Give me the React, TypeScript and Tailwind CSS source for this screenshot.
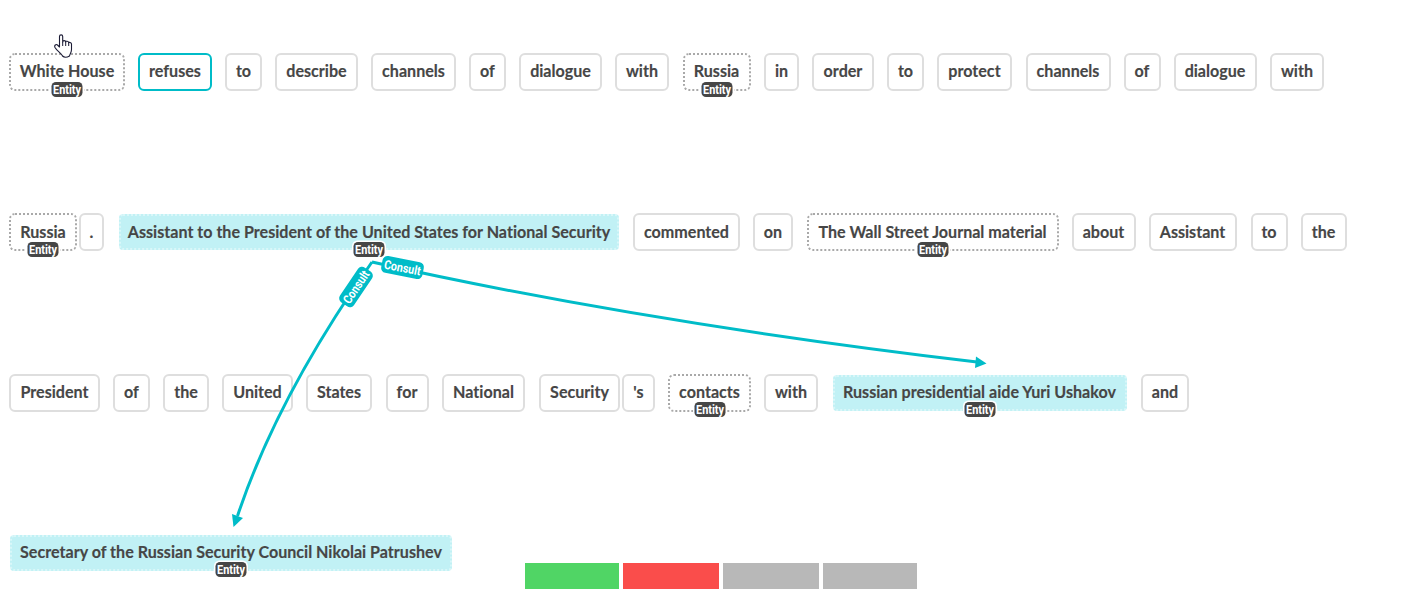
type Kind = "word" | "entity" | "active" | "linked";
type Token = { text: string; width: string; kind?: Kind; gap?: string };

const rows: Token[][] = [
  [
    { text: "White House", width: "w-[116px]", kind: "entity" },
    { text: "refuses", width: "w-[74px]", kind: "active", gap: "ml-[13px]" },
    { text: "to", width: "w-[37px]", gap: "ml-[13px]" },
    { text: "describe", width: "w-[83px]", gap: "ml-[13px]" },
    { text: "channels", width: "w-[85px]", gap: "ml-[13px]" },
    { text: "of", width: "w-[37px]", gap: "ml-[13px]" },
    { text: "dialogue", width: "w-[83px]", gap: "ml-[13px]" },
    { text: "with", width: "w-[54px]", gap: "ml-[13px]" },
    { text: "Russia", width: "w-[68px]", kind: "entity", gap: "ml-[13.5px]" },
    { text: "in", width: "w-[35px]", gap: "ml-[13.5px]" },
    { text: "order", width: "w-[62px]", gap: "ml-[13px]" },
    { text: "to", width: "w-[37px]", gap: "ml-[13px]" },
    { text: "protect", width: "w-[75px]", gap: "ml-[13px]" },
    { text: "channels", width: "w-[85px]", gap: "ml-[13.5px]" },
    { text: "of", width: "w-[37px]", gap: "ml-[13px]" },
    { text: "dialogue", width: "w-[83px]", gap: "ml-[13px]" },
    { text: "with", width: "w-[54px]", gap: "ml-[13.5px]" },
  ],
  [
    { text: "Russia", width: "w-[68px]", kind: "entity" },
    { text: ".", width: "w-[25px]", gap: "ml-[2px]" },
    { text: "Assistant to the President of the United States for National Security", width: "w-[500px]", kind: "linked", gap: "ml-[15px]" },
    { text: "commented", width: "w-[107px]", gap: "ml-[14px]" },
    { text: "on", width: "w-[40px]", gap: "ml-[13px]" },
    { text: "The Wall Street Journal material", width: "w-[252px]", kind: "entity", gap: "ml-[13.5px]" },
    { text: "about", width: "w-[64px]", gap: "ml-[13px]" },
    { text: "Assistant", width: "w-[88px]", gap: "ml-[13px]" },
    { text: "to", width: "w-[37px]", gap: "ml-[14px]" },
    { text: "the", width: "w-[46px]", gap: "ml-[13px]" },
  ],
  [
    { text: "President", width: "w-[91px]" },
    { text: "of", width: "w-[37px]", gap: "ml-[13px]" },
    { text: "the", width: "w-[46px]", gap: "ml-[13px]" },
    { text: "United", width: "w-[71px]", gap: "ml-[13px]" },
    { text: "States", width: "w-[66px]", gap: "ml-[13px]" },
    { text: "for", width: "w-[43px]", gap: "ml-[13.5px]" },
    { text: "National", width: "w-[83px]", gap: "ml-[13.5px]" },
    { text: "Security", width: "w-[81px]", gap: "ml-[14px]" },
    { text: "'s", width: "w-[33px]", gap: "ml-[2px]" },
    { text: "contacts", width: "w-[83px]", kind: "entity", gap: "ml-[13px]" },
    { text: "with", width: "w-[54px]", gap: "ml-[13px]" },
    { text: "Russian presidential aide Yuri Ushakov", width: "w-[294px]", kind: "linked", gap: "ml-[14.5px]" },
    { text: "and", width: "w-[48px]", gap: "ml-[14.5px]" },
  ],
  [{ text: "Secretary of the Russian Security Council Nikolai Patrushev", width: "w-[442px]", kind: "linked", gap: "ml-px" }],
];

const styles: Record<Kind, string> = {
  word: "h-[38px] rounded-[6px] border-2 border-solid border-[#dedede] bg-white",
  active: "h-[38px] rounded-[6px] border-2 border-solid border-[#00bcc8]",
  entity: "h-[38px] rounded-[6px] border-2 border-dotted border-[#a9a9a9]",
  linked: "h-[36px] rounded-[4px] border-2 border-dotted border-[#d9f7f9] bg-[#c1f1f5]",
};

const badgeTops: Record<Kind, string> = {
  word: "top-[25px]",
  active: "top-[25px]",
  entity: "top-[24.5px]",
  linked: "top-[23.5px]",
};

function EntityBadge({ top }: { top: string }) {
  return (
    <svg className={`absolute left-1/2 z-20 -translate-x-1/2 ${top}`} width="34" height="19" viewBox="0 0 34 19">
      <rect x="0" y="0.500" width="34" height="18" rx="5.500" fill="#fff" />
      <rect x="1.500" y="2" width="31" height="15" rx="4.500" fill="#464646" />
      <text x="3" y="13.500" textLength="28" lengthAdjust="spacingAndGlyphs" className="fill-white font-['Roboto',sans-serif] text-[12.5px] font-bold">Entity</text>
    </svg>
  );
}

function TokenBox({ text, width, kind = "word", gap = "" }: Token) {
  return (
    <div className={`relative flex shrink-0 items-center justify-center whitespace-nowrap ${styles[kind]} ${width} ${gap}`}>
      <span className="-mt-px">{text}</span>
      {(kind === "entity" || kind === "linked") && <EntityBadge top={badgeTops[kind]} />}
    </div>
  );
}

function RelationLabel({ transform }: { transform: string }) {
  return (
    <g transform={transform}>
      <rect x="-21" y="-8.500" width="42" height="17" rx="5" fill="#00bcc8" />
      <text x="-18.500" y="4.500" textLength="37" lengthAdjust="spacingAndGlyphs" className="fill-white font-['Roboto',sans-serif] text-[12.5px] font-bold">Consult</text>
    </g>
  );
}

export default function App() {
  return (
    <main className="relative h-[589px] w-[1411px] overflow-hidden bg-white font-['Lato',sans-serif] text-[16.1px] font-bold text-[#464646] [-webkit-text-stroke:0.15px_#464646] [font-variant-ligatures:none]">
      <div className="flex flex-col gap-[122.3px] pl-[9px] pt-[53px]">
        {rows.map((row, i) => (
          <div key={i} className="flex h-[38px] items-center">
            {row.map((token, j) => <TokenBox key={j} {...token} />)}
          </div>
        ))}
      </div>
      <svg className="absolute left-0 top-0 z-10 [-webkit-text-stroke:0]" width="1411" height="589" viewBox="0 0 1411 589">
        <g fill="none" stroke="#00bcc8" strokeWidth="3" strokeLinejoin="round">
          <path d="M237.500 516Q277 397 372 262" />
          <path d="M372 262Q640 322 977 362" />
        </g>
        <path d="M232 514L243 518L233.500 527Z" fill="#00bcc8" />
        <path d="M976 356.500L986.500 363.500L975 368Z" fill="#00bcc8" />
        <RelationLabel transform="translate(402.500 267.500) rotate(11)" />
        <RelationLabel transform="translate(356 287) rotate(-56)" />
      </svg>
      <svg className="absolute left-[54px] top-[34px] z-20" width="19" height="25" viewBox="0 0 19 25">
        <path d="M5.500 13V2.500C5.500 .3 8.700 .3 8.700 2.500V8C8.700 6.200 11.700 6.200 11.700 8C11.700 6.800 14.700 7 14.700 8.800C14.700 8 17.500 8.200 17.500 10V15.500C17.500 18.500 16 19.500 15.500 22C13 23.500 10 23.500 8.500 22C7.500 19.500 3 17 1 13.500C0 11.500 2 9.700 3.500 11Z" fill="#fff" stroke="#1b1b35" strokeWidth="1.100" strokeLinejoin="round" />
        <path d="M8.700 8V12M11.700 8V12M14.700 8.800V12" fill="none" stroke="#1b1b35" />
      </svg>
      <div className="absolute left-[525px] top-[563px] flex h-[26px] gap-1">
        <div className="w-[94px] bg-[#50d565]" />
        <div className="w-[96px] bg-[#fa4d4b]" />
        <div className="w-[96px] bg-[#b8b8b8]" />
        <div className="w-[94px] bg-[#b8b8b8]" />
      </div>
    </main>
  );
}
